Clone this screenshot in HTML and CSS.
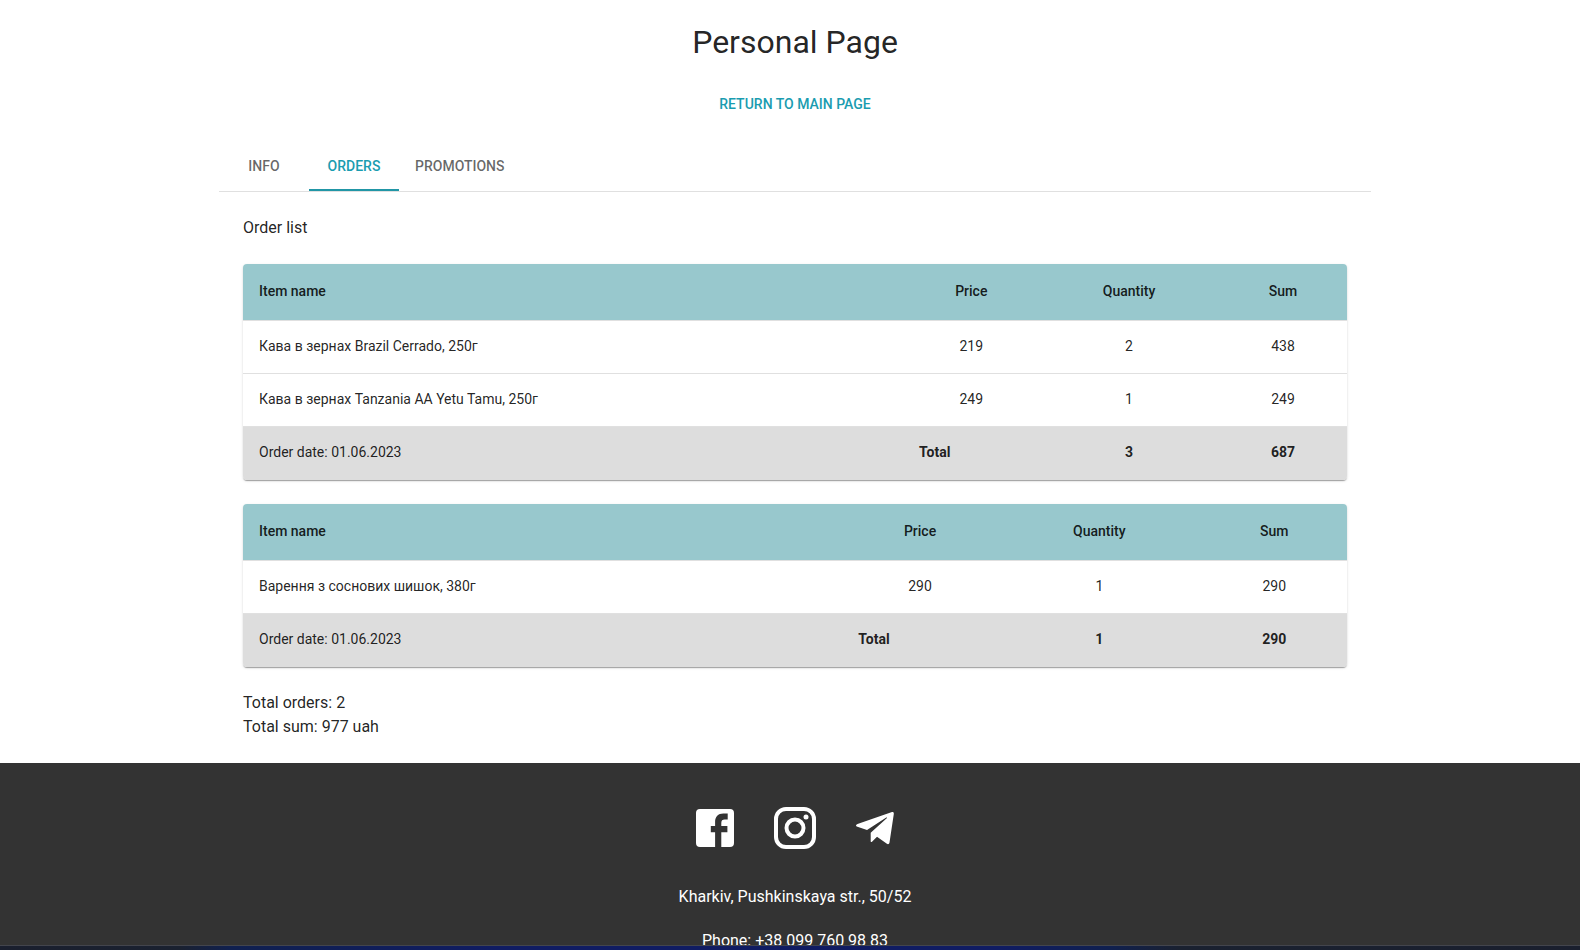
FILE: index.html
```html
<!DOCTYPE html>
<html lang="en">
<head>
<meta charset="utf-8">
<title>Personal Page</title>
<link rel="stylesheet" href="styles.css">
</head>
<body>
<div class="page">
  <main class="container">
    <h1 class="title">Personal Page</h1>
    <a class="return-link">Return to main page</a>
    <nav class="tabs">
      <button class="tab">Info</button>
      <button class="tab tab-active">Orders</button>
      <button class="tab">Promotions</button>
    </nav>
    <section class="panel">
      <p class="text">Order list</p>
      <table class="orders orders-first">
        <colgroup><col><col class="col-price"><col class="col-quantity"><col class="col-sum"></colgroup>
        <thead><tr><th>Item name</th><th>Price</th><th>Quantity</th><th>Sum</th></tr></thead>
        <tbody>
          <tr><td>Кава в зернах Brazil Cerrado, 250г</td><td>219</td><td>2</td><td>438</td></tr>
          <tr><td>Кава в зернах Tanzania AA Yetu Tamu, 250г</td><td>249</td><td>1</td><td>249</td></tr>
          <tr class="total"><td>Order date: 01.06.2023</td><td class="total-label">Total</td><td>3</td><td>687</td></tr>
        </tbody>
      </table>
      <table class="orders orders-second">
        <colgroup><col><col class="col-price"><col class="col-quantity"><col class="col-sum"></colgroup>
        <thead><tr><th>Item name</th><th>Price</th><th>Quantity</th><th>Sum</th></tr></thead>
        <tbody>
          <tr><td>Варення з соснових шишок, 380г</td><td>290</td><td>1</td><td>290</td></tr>
          <tr class="total"><td>Order date: 01.06.2023</td><td class="total-label">Total</td><td>1</td><td>290</td></tr>
        </tbody>
      </table>
      <div>
        <p class="text">Total orders: 2</p>
        <p class="text">Total sum: 977 uah</p>
      </div>
    </section>
  </main>
  <footer class="footer">
    <div class="socials">
      <svg class="social" viewBox="0 0 50 50"><path d="M10 6h30a4 4 0 0 1 4 4v30a4 4 0 0 1-4 4h-8.700V29.300h6.100v-6.300h-6.100v-3c0-2.400 1-3.500 3.500-3.500h2.900v-6h-4.400c-5.200 0-8.200 3.200-8.200 8.500v4H20.800v6.300h4.300V44H10a4 4 0 0 1-4-4V10a4 4 0 0 1 4-4z"/></svg>
      <svg class="social" viewBox="0 0 50 50"><rect class="stroke" x="6" y="6" width="38" height="38" rx="10"/><circle class="stroke" cx="25" cy="25" r="8.500"/><circle cx="36" cy="14" r="2.500"/></svg>
      <svg class="social" viewBox="0 0 50 50"><path d="M43.800 11L39.500 39.600c-.3 1.500-1.400 1.900-2.600 1.200L27 33.700l-5 5c-.8.800-1.300.4-1.300-.8v-8.200L37 14.900c.4-.5-.1-.7-.7-.3L17 26.900l-9.600-3.100c-1.900-.6-1.900-1.900.1-2.700L42 9.100c1.300-.5 2 .3 1.800 1.900z"/></svg>
    </div>
    <p class="text">Kharkiv, Pushkinskaya str., 50/52</p>
    <p class="text">Phone: +38 099 760 98 83</p>
  </footer>
</div>
<div class="taskbar"></div>
</body>
</html>
```
FILE: styles.css
```css
* { box-sizing: border-box; }
html { overflow: hidden; }
body {
  margin: 0;
  height: 950px;
  overflow: hidden;
  background: #fff;
  color: rgba(0, 0, 0, 0.87);
  font-family: Roboto, sans-serif;
}
.page { width: 1590px; }
.container {
  display: flex;
  flex-direction: column;
  width: 1152px;
  margin: 0 auto;
}
.title {
  margin: 22px 0 0;
  text-align: center;
  font-size: 32px;
  font-weight: 400;
  line-height: 40px;
}
.return-link {
  margin: 30px auto 26px;
  color: #1a9cb0;
  font-size: 14px;
  font-weight: 500;
  line-height: 25px;
  text-transform: uppercase;
}
.tabs {
  display: flex;
  height: 49px;
  border-bottom: 1px solid #e0e0e0;
}
.tab {
  min-width: 90px;
  height: 48px;
  padding: 0 16px 2px;
  border: 0;
  background: none;
  color: rgba(0, 0, 0, 0.6);
  font: 500 14px/18px Roboto, sans-serif;
  text-transform: uppercase;
}
.tab-active {
  color: #1a9cb0;
  box-shadow: inset 0 -2px #2196a6;
}
.panel {
  display: flex;
  flex-direction: column;
  gap: 24px;
  padding: 24px;
}
.text {
  margin: 0;
  font-size: 16px;
  line-height: 24px;
}
.orders {
  width: 100%;
  table-layout: fixed;
  border-collapse: separate;
  border-spacing: 0;
  border-radius: 4px;
  overflow: hidden;
  font-size: 14px;
  text-align: center;
  box-shadow: 0 2px 1px -1px rgba(0, 0, 0, 0.2), 0 1px 1px rgba(0, 0, 0, 0.14), 0 1px 3px rgba(0, 0, 0, 0.12);
}
.orders th,
.orders td {
  padding: 15px 16px 17px;
  border-bottom: 1px solid #e0e0e0;
}
.orders th {
  background: #98c8cd;
  font-weight: 500;
  line-height: 24px;
}
.orders td { line-height: 20px; }
.orders th:first-child,
.orders td:first-child { text-align: left; }
.orders .total td {
  background: #ddd;
  border-bottom-color: #ddd;
  font-weight: 700;
}
.orders .total td:first-child { font-weight: 400; }
.orders .total .total-label {
  padding-left: 15.5px;
  text-align: left;
}
.orders-first .col-price { width: 135.4px; }
.orders-first .col-quantity { width: 180px; }
.orders-first .col-sum { width: 128px; }
.orders-second .col-price { width: 154.4px; }
.orders-second .col-quantity { width: 204.2px; }
.orders-second .col-sum { width: 145.6px; }
.footer {
  display: flex;
  flex-direction: column;
  align-items: center;
  gap: 20px;
  padding: 40px 0;
  background: #333;
  color: #fff;
}
.socials {
  display: flex;
  gap: 30px;
  margin-bottom: 12px;
}
.social {
  width: 50px;
  height: 50px;
  fill: #fff;
}
.social .stroke {
  fill: none;
  stroke: #fff;
  stroke-width: 4;
}
.taskbar {
  position: fixed;
  inset: auto 0 0;
  height: 5px;
  border-top: 1px solid #43454d;
  background: linear-gradient(90deg, #1a1f2e 0, #1a2130 180px, #10204f 230px, #101c62 500px, #101c62 1000px, #10204f 1110px, #1a2130 1180px, #1a1f2e 100%);
}
```
